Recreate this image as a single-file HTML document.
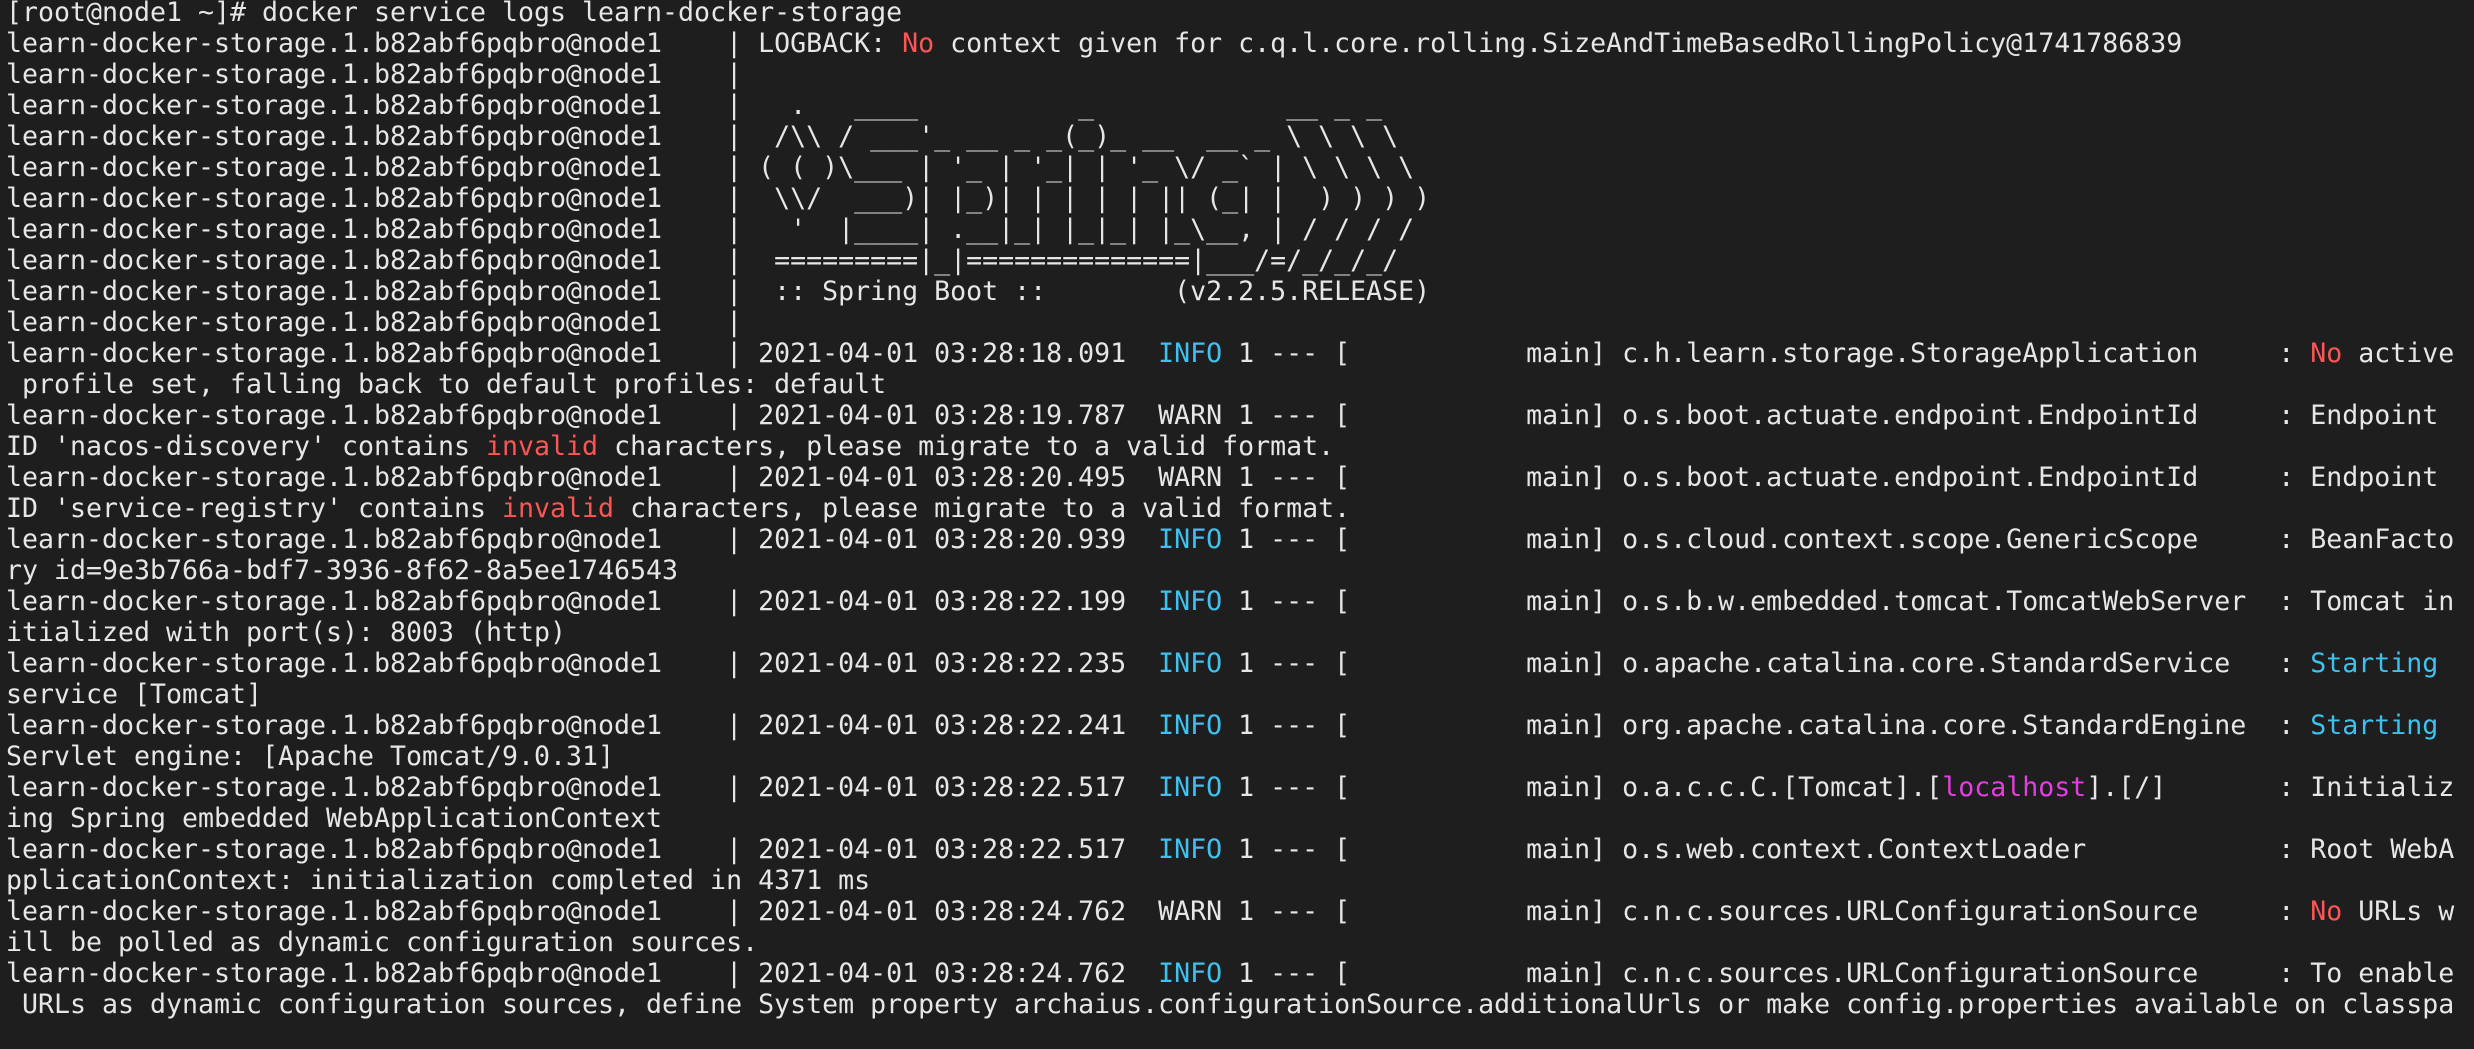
<!DOCTYPE html>
<html><head><meta charset="utf-8">
<style>
html,body{margin:0;padding:0;background:#1e1e1e;}
body{width:2474px;height:1049px;overflow:hidden;position:relative;}
pre{position:absolute;left:6px;top:-3px;margin:0;font-family:"DejaVu Sans Mono","Liberation Mono",monospace;font-size:26.58px;line-height:31px;color:#e6e6e6;white-space:pre;}
.c{color:#3fc1ee;}
.r{color:#ff5555;}
.m{color:#e23ee2;}
</style></head><body>
<pre>[root@node1 ~]# docker service logs learn-docker-storage
learn-docker-storage.1.b82abf6pqbro@node1    | LOGBACK: <span class="r">No</span> context given for c.q.l.core.rolling.SizeAndTimeBasedRollingPolicy@1741786839
learn-docker-storage.1.b82abf6pqbro@node1    |
learn-docker-storage.1.b82abf6pqbro@node1    |   .   ____          _            __ _ _
learn-docker-storage.1.b82abf6pqbro@node1    |  /\\ / ___'_ __ _ _(_)_ __  __ _ \ \ \ \
learn-docker-storage.1.b82abf6pqbro@node1    | ( ( )\___ | '_ | '_| | '_ \/ _` | \ \ \ \
learn-docker-storage.1.b82abf6pqbro@node1    |  \\/  ___)| |_)| | | | | || (_| |  ) ) ) )
learn-docker-storage.1.b82abf6pqbro@node1    |   '  |____| .__|_| |_|_| |_\__, | / / / /
learn-docker-storage.1.b82abf6pqbro@node1    |  =========|_|==============|___/=/_/_/_/
learn-docker-storage.1.b82abf6pqbro@node1    |  :: Spring Boot ::        (v2.2.5.RELEASE)
learn-docker-storage.1.b82abf6pqbro@node1    |
learn-docker-storage.1.b82abf6pqbro@node1    | 2021-04-01 03:28:18.091  <span class="c">INFO</span> 1 --- [           main] c.h.learn.storage.StorageApplication     : <span class="r">No</span> active
 profile set, falling back to default profiles: default
learn-docker-storage.1.b82abf6pqbro@node1    | 2021-04-01 03:28:19.787  WARN 1 --- [           main] o.s.boot.actuate.endpoint.EndpointId     : Endpoint
ID 'nacos-discovery' contains <span class="r">invalid</span> characters, please migrate to a valid format.
learn-docker-storage.1.b82abf6pqbro@node1    | 2021-04-01 03:28:20.495  WARN 1 --- [           main] o.s.boot.actuate.endpoint.EndpointId     : Endpoint
ID 'service-registry' contains <span class="r">invalid</span> characters, please migrate to a valid format.
learn-docker-storage.1.b82abf6pqbro@node1    | 2021-04-01 03:28:20.939  <span class="c">INFO</span> 1 --- [           main] o.s.cloud.context.scope.GenericScope     : BeanFacto
ry id=9e3b766a-bdf7-3936-8f62-8a5ee1746543
learn-docker-storage.1.b82abf6pqbro@node1    | 2021-04-01 03:28:22.199  <span class="c">INFO</span> 1 --- [           main] o.s.b.w.embedded.tomcat.TomcatWebServer  : Tomcat in
itialized with port(s): 8003 (http)
learn-docker-storage.1.b82abf6pqbro@node1    | 2021-04-01 03:28:22.235  <span class="c">INFO</span> 1 --- [           main] o.apache.catalina.core.StandardService   : <span class="c">Starting</span>
service [Tomcat]
learn-docker-storage.1.b82abf6pqbro@node1    | 2021-04-01 03:28:22.241  <span class="c">INFO</span> 1 --- [           main] org.apache.catalina.core.StandardEngine  : <span class="c">Starting</span>
Servlet engine: [Apache Tomcat/9.0.31]
learn-docker-storage.1.b82abf6pqbro@node1    | 2021-04-01 03:28:22.517  <span class="c">INFO</span> 1 --- [           main] o.a.c.c.C.[Tomcat].[<span class="m">localhost</span>].[/]       : Initializ
ing Spring embedded WebApplicationContext
learn-docker-storage.1.b82abf6pqbro@node1    | 2021-04-01 03:28:22.517  <span class="c">INFO</span> 1 --- [           main] o.s.web.context.ContextLoader            : Root WebA
pplicationContext: initialization completed in 4371 ms
learn-docker-storage.1.b82abf6pqbro@node1    | 2021-04-01 03:28:24.762  WARN 1 --- [           main] c.n.c.sources.URLConfigurationSource     : <span class="r">No</span> URLs w
ill be polled as dynamic configuration sources.
learn-docker-storage.1.b82abf6pqbro@node1    | 2021-04-01 03:28:24.762  <span class="c">INFO</span> 1 --- [           main] c.n.c.sources.URLConfigurationSource     : To enable
 URLs as dynamic configuration sources, define System property archaius.configurationSource.additionalUrls or make config.properties available on classpa</pre>
</body></html>
